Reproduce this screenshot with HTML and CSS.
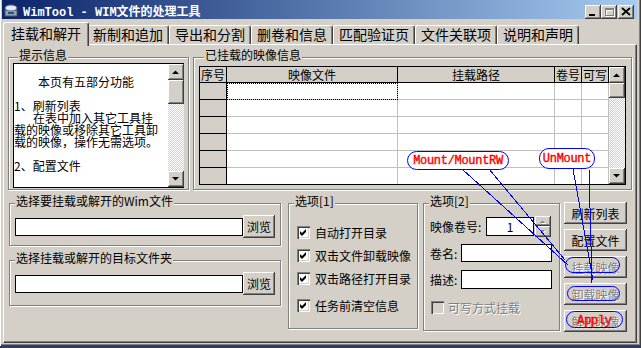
FILE: index.html
```html
<!DOCTYPE html>
<html lang="zh-CN">
<head>
    <meta charset="UTF-8">
    <title>WimTool - WIM文件的处理工具</title>
    <link rel="stylesheet" href="styles.css">
</head>
<body>

<div class="window">
    <div class="titlebar">
        <svg class="app-icon" viewBox="0 0 16 16">
            <rect x="2" y="8" width="12" height="6" fill="#9aa4b0" stroke="#4a5260"/>
            <ellipse cx="8" cy="6" rx="6" ry="3" fill="#e4ecf6" stroke="#5a6a80"/>
            <rect x="5" y="10" width="6" height="2" fill="#2050a0"/>
        </svg>
        <span class="title">WimTool - WIM文件的处理工具</span>
        <div class="caption-buttons">
            <span class="cap-btn"><svg viewBox="0 0 16 14"><rect x="4" y="9" width="6" height="2" fill="#000"/></svg></span>
            <span class="cap-btn"><svg viewBox="0 0 16 14"><path d="M4 3h9v8H4z M5 5v5h7V5z" fill="#fff" transform="translate(1 1)"/><path d="M4 3h9v8H4z M5 5v5h7V5z" fill="#808080"/></svg></span>
            <span class="cap-btn close"><svg viewBox="0 0 16 14"><path d="M4 3l8 7M12 3l-8 7" stroke="#000" stroke-width="1.8"/></svg></span>
        </div>
    </div>

    <div class="tabs">
        <span class="tab active">挂载和解开</span>
        <span class="tab">新制和追加</span>
        <span class="tab">导出和分割</span>
        <span class="tab">删卷和信息</span>
        <span class="tab">匹配验证页</span>
        <span class="tab">文件关联项</span>
        <span class="tab">说明和声明</span>
    </div>

    <div class="panel">
        <div class="top-row">
            <div class="group hint-group">
                <div class="group-title">提示信息</div>
                <div class="hint-box">
                    <div class="hint-text">
                        <p class="center">本页有五部分功能</p>
                        <p></p>
                        <p>1、刷新列表</p>
                        <p class="indent">在表中加入其它工具挂</p>
                        <p>载的映像或移除其它工具卸</p>
                        <p>载的映像，操作无需选项。</p>
                        <p></p>
                        <p>2、配置文件</p>
                    </div>
                    <div class="vscroll">
                        <span class="sb-btn"><svg viewBox="0 0 16 16"><path d="M4 10h7L7.5 6.5z"/></svg></span>
                        <span class="sb-thumb hint-thumb"></span>
                        <span class="sb-track"></span>
                        <span class="sb-btn"><svg viewBox="0 0 16 16"><path d="M4 6h7L7.5 9.5z"/></svg></span>
                    </div>
                </div>
            </div>

            <div class="group mounted-group">
                <div class="group-title">已挂载的映像信息</div>
                <div class="grid">
                    <div class="grid-cells">
                        <span class="cell head">序号</span>
                        <span class="cell head">映像文件</span>
                        <span class="cell head">挂载路径</span>
                        <span class="cell head">卷号</span>
                        <span class="cell head">可写</span>

                        <span class="cell rowhead"></span><span class="cell focus"></span><span class="cell"></span><span class="cell"></span><span class="cell"></span>
                        <span class="cell rowhead"></span><span class="cell"></span><span class="cell"></span><span class="cell"></span><span class="cell"></span>
                        <span class="cell rowhead"></span><span class="cell"></span><span class="cell"></span><span class="cell"></span><span class="cell"></span>
                        <span class="cell rowhead"></span><span class="cell"></span><span class="cell"></span><span class="cell"></span><span class="cell"></span>
                        <span class="cell rowhead"></span><span class="cell"></span><span class="cell"></span><span class="cell"></span><span class="cell"></span>
                        <span class="cell rowhead"></span><span class="cell"></span><span class="cell"></span><span class="cell"></span><span class="cell"></span>
                    </div>
                    <div class="vscroll">
                        <span class="sb-btn"><svg viewBox="0 0 16 16"><path d="M4 10h7L7.5 6.5z"/></svg></span>
                        <span class="sb-thumb grid-thumb"></span>
                        <span class="sb-track"></span>
                        <span class="sb-btn"><svg viewBox="0 0 16 16"><path d="M4 6h7L7.5 9.5z"/></svg></span>
                    </div>
                </div>
            </div>
        </div>

        <div class="bottom-row">
            <div class="file-col">
                <div class="group file-group">
                    <div class="group-title">选择要挂载或解开的Wim文件</div>
                    <div class="file-row">
                        <span class="field path-field"></span>
                        <span class="btn browse">浏览</span>
                    </div>
                </div>
                <div class="group file-group second">
                    <div class="group-title">选择挂载或解开的目标文件夹</div>
                    <div class="file-row">
                        <span class="field path-field"></span>
                        <span class="btn browse">浏览</span>
                    </div>
                </div>
            </div>

            <div class="group opt1">
                <div class="group-title">选项[1]</div>
                <div class="checks">
                    <label class="check-row"><span class="box"><svg viewBox="0 0 13 13"><path d="M3 5l2 2 4-4v3l-4 4-2-2z"/></svg></span>自动打开目录</label>
                    <label class="check-row"><span class="box"><svg viewBox="0 0 13 13"><path d="M3 5l2 2 4-4v3l-4 4-2-2z"/></svg></span>双击文件卸载映像</label>
                    <label class="check-row"><span class="box"><svg viewBox="0 0 13 13"><path d="M3 5l2 2 4-4v3l-4 4-2-2z"/></svg></span>双击路径打开目录</label>
                    <label class="check-row last"><span class="box"><svg viewBox="0 0 13 13"><path d="M3 5l2 2 4-4v3l-4 4-2-2z"/></svg></span>任务前清空信息</label>
                </div>
            </div>

            <div class="group opt2">
                <div class="group-title">选项[2]</div>
                <div class="opt-row vol-row">
                    <span class="opt-label wide">映像卷号:</span>
                    <span class="field vol-field">1</span>
                    <span class="spin">
                        <span class="spin-btn"><svg viewBox="0 0 16 10"><path d="M5 7h5L7.5 4.5z" fill="#fff" transform="translate(1 1)"/><path d="M5 7h5L7.5 4.5z" fill="#808080"/></svg></span>
                        <span class="spin-btn"><svg viewBox="0 0 16 11"><path d="M5 4h5L7.5 6.5z" fill="#fff" transform="translate(1 1)"/><path d="M5 4h5L7.5 6.5z" fill="#808080"/></svg></span>
                    </span>
                </div>
                <div class="opt-row name-row">
                    <span class="opt-label">卷名:</span>
                    <span class="field text-field"></span>
                </div>
                <div class="opt-row desc-row">
                    <span class="opt-label">描述:</span>
                    <span class="field text-field tall"></span>
                </div>
                <label class="opt-row check-row disabled"><span class="box off"></span>可写方式挂载</label>
            </div>

            <div class="side-buttons">
                <span class="btn">刷新列表</span>
                <span class="btn">配置文件</span>
                <span class="btn disabled">挂载映像</span>
                <span class="btn disabled">卸载映像</span>
                <span class="btn disabled">解开映像</span>
            </div>
        </div>
    </div>

    <!-- annotations drawn over the dialog -->
    <svg class="callout-lines" width="641" height="348" viewBox="0 0 641 348">
        <line x1="462" y1="169" x2="568" y2="265"/>
        <line x1="489" y1="169" x2="565" y2="260"/>
        <line x1="573" y1="169" x2="593" y2="280"/>
        <line x1="589" y1="169" x2="592" y2="283"/>
    </svg>
    <div class="bubble mount">Mount/MountRW</div>
    <div class="bubble unmount">UnMount</div>
    <div class="ring ring-mount"></div>
    <div class="ring ring-unmount"></div>
    <div class="ring ring-apply">Apply</div>
</div>

</body>
</html>
```

FILE: styles.css
```css
body {
    margin: 0;
    background: #2c3e5a;
    font-family: "Noto Sans CJK SC", sans-serif;
    font-size: 12px;
    color: #000;
}

.window {
    position: relative;
    width: 641px;
    height: 346px;
    background: #d4d0c8;
    box-shadow: inset 1px 0 #fff, inset -1px -1px #404040, inset -2px -2px #808080;
    display: flex;
    flex-direction: column;
}

/* title bar */
.titlebar {
    height: 19px;
    margin: 0 4px 0 2px;
    display: flex;
    align-items: center;
    background: linear-gradient(90deg, #0a246a, #a6caf0);
}

.app-icon {
    width: 16px;
    height: 16px;
    margin-left: 1px;
}

.title {
    margin-left: 4px;
    padding-top: 2px;
    color: #fff;
    font: bold 12px "Liberation Mono", "Noto Sans CJK SC", monospace;
    white-space: pre;
}

.caption-buttons {
    display: flex;
    align-self: flex-start;
    margin: 5px 3px 0 auto;
}

.cap-btn {
    display: flex;
    width: 16px;
    height: 14px;
    background: #d4d0c8;
    box-shadow: inset -1px -1px #404040, inset 1px 1px #fff, inset -2px -2px #808080;
}

.cap-btn svg {
    width: 16px;
    height: 14px;
}

.cap-btn.close {
    margin-left: 1px;
}

/* tabs */
.tabs {
    display: flex;
    align-items: flex-end;
    height: 23px;
    margin-top: 2px;
    padding-left: 5px;
}

.tab {
    width: 82px;
    height: 19px;
    box-sizing: border-box;
    border-top: 1px solid #fff;
    border-left: 1px solid #fff;
    border-right: 1px solid #404040;
    border-radius: 3px 3px 0 0;
    box-shadow: inset -1px 0 #808080;
    background: #d4d0c8;
    text-align: center;
    font-size: 14px;
    line-height: 17px;
    white-space: nowrap;
}

.tab.active {
    position: relative;
    z-index: 1;
    width: 86px;
    height: 24px;
    margin: 0 -2px -2px;
    line-height: 20px;
}

.panel {
    height: 299px;
    margin: 0 4px 0 3px;
    box-sizing: border-box;
    border: 1px solid;
    border-color: #fff #404040 #404040 #fff;
    box-shadow: inset -1px -1px #808080;
}

/* group boxes */
.group {
    box-sizing: border-box;
    border: 1px solid #808080;
    box-shadow: inset 1px 1px #fff, 1px 1px #fff;
}

.group-title {
    width: max-content;
    margin: -10px 0 0 5px;
    padding: 0 1px;
    line-height: 14px;
    background: #d4d0c8;
}

.top-row {
    display: flex;
    gap: 4px;
    margin: 12px 0 0 4px;
}

.hint-group {
    width: 181px;
    height: 133px;
    padding-left: 4px;
}

.hint-box {
    display: flex;
    width: 171px;
    height: 125px;
    margin-top: 1px;
    box-sizing: border-box;
    border: 1px solid #000;
    border-right: 0;
}

.hint-text {
    flex: 1;
    background: #fff;
    padding-top: 12px;
}

.hint-text p {
    margin: 0;
    height: 12px;
    line-height: 12px;
    white-space: nowrap;
}

.hint-text .center {
    padding-left: 24px;
}

.hint-text .indent {
    padding-left: 19px;
}

/* scrollbars */
.vscroll {
    display: flex;
    flex-direction: column;
    width: 16px;
    flex: none;
    background: repeating-conic-gradient(#d4d0c8 0 25%, #fff 0 50%) 0 0 / 2px 2px;
}

.sb-btn, .sb-thumb {
    flex: none;
    display: flex;
    height: 16px;
    background: #d4d0c8;
    box-shadow: inset -1px -1px #404040, inset 1px 1px #fff, inset -2px -2px #808080;
}

.sb-btn svg {
    width: 16px;
    height: 16px;
}

.sb-track {
    flex: 1;
}

.hint-thumb {
    height: 24px;
}

.grid-thumb {
    height: 15px;
}

/* mounted images grid */
.mounted-group {
    width: 439px;
    height: 133px;
    padding-left: 5px;
}

.grid {
    display: flex;
    width: 427px;
    height: 119px;
    margin-top: 4px;
    box-sizing: border-box;
    border: 1px solid #000;
    background: #fff;
}

.grid-cells {
    display: grid;
    grid-template-columns: 27px 171px 157px 27px 27px;
    grid-template-rows: 16px repeat(5, 17px) 16px;
}

.cell {
    box-sizing: border-box;
    border-right: 1px solid #c0c0c0;
    border-bottom: 1px solid #c0c0c0;
    background: #fff;
}

.cell.head {
    background: #d4d0c8;
    border-color: #000;
    text-align: center;
    line-height: 15px;
}

.cell.rowhead {
    background: #d4d0c8;
    border-color: #000;
}

.cell.focus {
    outline: 1px dotted #000;
    outline-offset: -1px;
}

.grid-cells > :nth-last-child(-n+5) {
    border-bottom: 0;
}

/* bottom part */
.bottom-row {
    display: flex;
    align-items: flex-start;
    margin: 13px 0 0 5px;
}

.file-col {
    display: flex;
    flex-direction: column;
    width: 272px;
}

.file-group {
    height: 43px;
}

.file-group.second {
    height: 46px;
    margin-top: 14px;
}

.file-row {
    display: flex;
    align-items: center;
    margin: 7px 0 0 5px;
}

.field {
    box-sizing: border-box;
    background: #fff;
    border: 1px solid #000;
}

.path-field {
    width: 228px;
    height: 18px;
}

.btn {
    display: flex;
    align-items: center;
    justify-content: center;
    box-sizing: border-box;
    height: 22px;
    background: #d4d0c8;
    box-shadow: inset -1px -1px #404040, inset 1px 1px #fff, inset -2px -2px #808080;
    white-space: nowrap;
}

.btn.browse {
    width: 32px;
    height: 23px;
}

.btn.disabled {
    color: #808080;
    text-shadow: 1px 1px 0 #fff;
}

.opt1 {
    width: 130px;
    height: 126px;
    margin-left: 7px;
}

.checks {
    display: flex;
    flex-direction: column;
    margin: 18px 0 0 8px;
}

.check-row {
    display: flex;
    align-items: center;
    gap: 5px;
    height: 13px;
    white-space: nowrap;
}

.checks .check-row + .check-row {
    margin-top: 10px;
}

.checks .check-row.last {
    margin-top: 14px;
}

.box {
    display: flex;
    flex: none;
    width: 13px;
    height: 13px;
    background: #fff;
    box-shadow: inset 1px 1px #808080, inset 2px 2px #404040, inset -1px -1px #fff, inset -2px -2px #d4d0c8;
}

.box svg {
    width: 13px;
    height: 13px;
}

.box.off {
    background: #d4d0c8;
}

.opt2 {
    width: 137px;
    height: 128px;
    margin-left: 5px;
}

.opt-row {
    display: flex;
    align-items: center;
    margin-left: 6px;
}

.opt-label {
    width: 31px;
    white-space: nowrap;
}

.opt-label.wide {
    width: 56px;
}

.vol-row {
    height: 22px;
    margin-top: 7px;
}

.vol-field {
    width: 48px;
    height: 19px;
    text-align: center;
    line-height: 17px;
}

.spin {
    display: flex;
    flex-direction: column;
    width: 16px;
    margin-left: 1px;
}

.spin-btn {
    display: flex;
    height: 11px;
    background: #d4d0c8;
    box-shadow: inset -1px -1px #404040, inset 1px 1px #fff, inset -2px -2px #808080;
}

.spin-btn:first-child {
    height: 10px;
}

.spin-btn svg {
    width: 16px;
    height: 100%;
}

.name-row {
    margin-top: 7px;
}

.desc-row {
    margin-top: 8px;
}

.text-field {
    width: 91px;
    height: 18px;
}

.text-field.tall {
    height: 19px;
}

.opt-row.check-row {
    margin: 12px 0 0 7px;
    gap: 4px;
}

.check-row.disabled {
    color: #808080;
    text-shadow: 1px 1px 0 #fff;
}

.side-buttons {
    display: flex;
    flex-direction: column;
    gap: 5px;
    width: 63px;
    margin: -1px 0 0 4px;
}

/* annotations */
.callout-lines {
    position: absolute;
    left: 0;
    top: 0;
    pointer-events: none;
    stroke: #0000ff;
    stroke-width: 1;
    shape-rendering: crispEdges;
}

.bubble, .ring {
    position: absolute;
    box-sizing: border-box;
    display: flex;
    align-items: center;
    justify-content: center;
    border: 1px solid #0000ff;
    color: #ff0000;
    font: 12px "Liberation Mono", monospace;
    letter-spacing: -0.3px;
    -webkit-text-stroke: 0.4px #ff0000;
}

.bubble {
    background: #fff;
}

.bubble.mount {
    left: 407px;
    top: 151px;
    width: 102px;
    height: 19px;
    border-radius: 10px;
}

.bubble.unmount {
    left: 539px;
    top: 148px;
    width: 56px;
    height: 21px;
    border-radius: 10px;
}

.ring-mount {
    left: 565px;
    top: 257px;
    width: 55px;
    height: 16px;
    border-radius: 8px;
}

.ring-unmount {
    left: 567px;
    top: 286px;
    width: 53px;
    height: 15px;
    border-radius: 8px;
}

.ring-apply {
    left: 566px;
    top: 311px;
    width: 57px;
    height: 17px;
    border-radius: 9px;
    padding-top: 2px;
}
```
